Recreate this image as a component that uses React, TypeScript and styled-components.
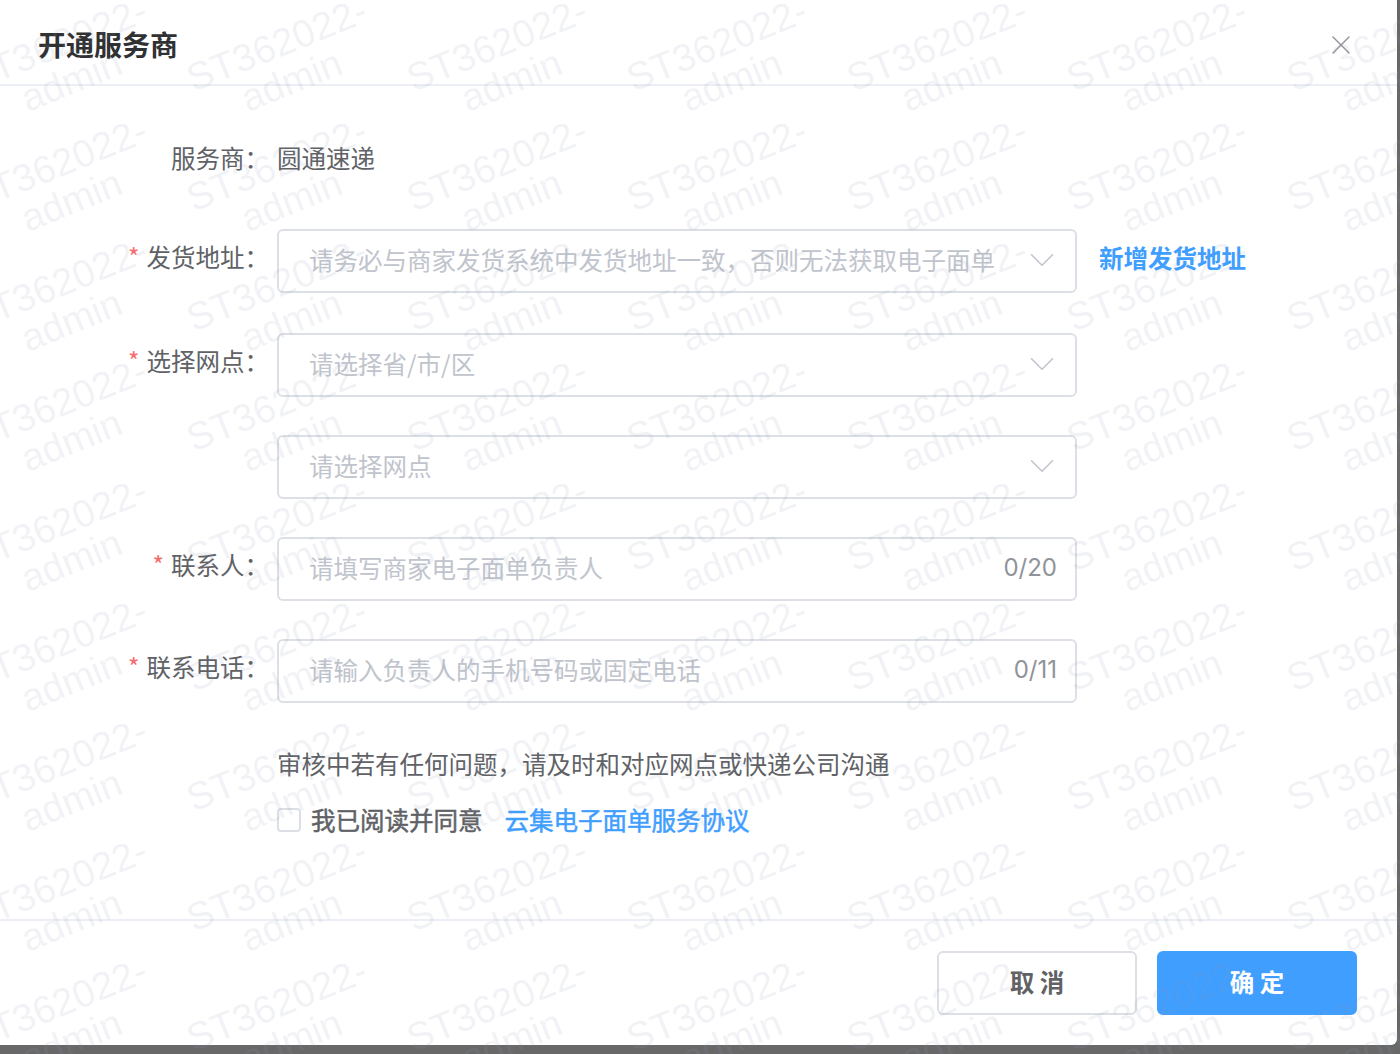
import React from 'react';
import styled, { createGlobalStyle } from 'styled-components';
import { X, ChevronDown } from 'lucide-react';

const GlobalStyle = createGlobalStyle`
  html, body {
    margin: 0;
    height: 100%;
    overflow: hidden;
    background: #686868;
  }
  * {
    box-sizing: border-box;
  }
`;

const Page = styled.div`
  position: relative;
  width: 1400px;
  height: 1054px;
  overflow: hidden;
  font-family: "Noto Sans CJK SC", "Liberation Sans", sans-serif;
`;

const Modal = styled.div`
  width: 1397px;
  height: 1045px;
  background: #fff;
  border-radius: 0 0 6px 0;
  display: flex;
  flex-direction: column;
  color: #606266;
  font-size: 24.5px;
`;

const Header = styled.header`
  height: 86px;
  flex: none;
  display: flex;
  align-items: center;
  justify-content: space-between;
  padding: 6px 40px 0 38px;
  border-bottom: 2px solid #ebeef5;
`;

const Title = styled.h2`
  margin: 0 0 2px;
  font-size: 28px;
  font-weight: 600;
  color: #303133;
  line-height: 40px;
`;

const CloseButton = styled.button`
  border: 0;
  padding: 0;
  background: none;
  color: #909399;
  display: flex;
`;

const Body = styled.div`
  flex: 1;
  padding-top: 41px;
  display: flex;
  flex-direction: column;
`;

const Row = styled.div<{ $gap: number }>`
  display: flex;
  align-items: center;
  min-height: 64px;
  margin-bottom: ${({ $gap }) => $gap}px;
`;

const Label = styled.label<{ $plain?: boolean }>`
  width: 277px;
  flex: none;
  padding: 0 8px ${({ $plain }) => ($plain ? 3 : 8)}px 0;
  text-align: right;
  line-height: 34px;
`;

const Star = styled.span`
  color: #f56c6c;
  margin-right: 7px;
`;

const Value = styled.span`
  line-height: 34px;
  padding-bottom: 3px;
`;

const Field = styled.div`
  width: 800px;
  height: 64px;
  flex: none;
  display: flex;
  align-items: center;
  justify-content: space-between;
  padding: 0 18px 3px 30px;
  border: 2px solid #dcdfe6;
  border-radius: 6px;
`;

const Placeholder = styled.span`
  color: #c0c4cc;
  white-space: nowrap;
`;

const Counter = styled.span`
  color: #909399;
  font-family: "Inter", "Liberation Sans", sans-serif;
  font-size: 24px;
`;

const Chevron = styled(ChevronDown)`
  color: #c0c4cc;
  flex: none;
  margin-right: -6px;
`;

const AddAddress = styled.a`
  margin: 0 0 8px 22px;
  color: #409eff;
  font-weight: 600;
  white-space: nowrap;
`;

const Note = styled.p`
  margin: 0 0 22px 277px;
  line-height: 34px;
`;

const AgreeRow = styled.div`
  display: flex;
  align-items: center;
  margin-left: 277px;
  line-height: 34px;
  -webkit-text-stroke: 0.5px currentColor;
`;

const CheckBox = styled.span`
  width: 24px;
  height: 24px;
  border: 2px solid #dcdfe6;
  border-radius: 4px;
  margin-right: 10px;
`;

const AgreeText = styled.span`
  margin-right: 22px;
`;

const AgreeLink = styled.a`
  color: #409eff;
  white-space: nowrap;
`;

const Footer = styled.footer`
  height: 126px;
  flex: none;
  display: flex;
  justify-content: flex-end;
  gap: 20px;
  padding: 30px 40px 0 0;
  border-top: 2px solid #ebeef5;
`;

const Button = styled.button<{ $primary?: boolean }>`
  width: 200px;
  height: 64px;
  padding: 0 0 3px;
  border-radius: 6px;
  border: 2px solid ${({ $primary }) => ($primary ? '#409eff' : '#dcdfe6')};
  background: ${({ $primary }) => ($primary ? '#409eff' : '#fff')};
  color: ${({ $primary }) => ($primary ? '#fff' : '#606266')};
  font-family: inherit;
  font-size: 24.5px;
  font-weight: 600;
`;

const Watermarks = styled.div`
  position: absolute;
  top: 2px;
  left: -266px;
  display: grid;
  grid-template-columns: repeat(9, 220px);
  grid-auto-rows: 120px;
  pointer-events: none;
`;

const Mark = styled.div`
  height: 120px;
  display: flex;
  flex-direction: column;
  align-items: center;
  justify-content: center;
  transform: rotate(-22deg);
  color: rgba(144, 155, 180, 0.12);
  font-family: "Liberation Sans", sans-serif;
  font-size: 38.5px;
  line-height: 39px;
  white-space: nowrap;
`;

const markCells = Array.from({ length: 81 }, (_, i) => i);

export default function App() {
  return (
    <Page>
      <GlobalStyle />
      <Modal>
        <Header>
          <Title>开通服务商</Title>
          <CloseButton>
            <X size={32} strokeWidth={1} />
          </CloseButton>
        </Header>

        <Body>
          <Row $gap={38}>
            <Label $plain>服务商：</Label>
            <Value>圆通速递</Value>
          </Row>
          <Row $gap={40}>
            <Label>
              <Star>*</Star>发货地址：
            </Label>
            <Field>
              <Placeholder>请务必与商家发货系统中发货地址一致，否则无法获取电子面单</Placeholder>
              <Chevron size={42} strokeWidth={0.9} />
            </Field>
            <AddAddress>新增发货地址</AddAddress>
          </Row>
          <Row $gap={38}>
            <Label>
              <Star>*</Star>选择网点：
            </Label>
            <Field>
              <Placeholder>请选择省/市/区</Placeholder>
              <Chevron size={42} strokeWidth={0.9} />
            </Field>
          </Row>
          <Row $gap={38}>
            <Label />
            <Field>
              <Placeholder>请选择网点</Placeholder>
              <Chevron size={42} strokeWidth={0.9} />
            </Field>
          </Row>
          <Row $gap={38}>
            <Label>
              <Star>*</Star>联系人：
            </Label>
            <Field>
              <Placeholder>请填写商家电子面单负责人</Placeholder>
              <Counter>0/20</Counter>
            </Field>
          </Row>
          <Row $gap={44}>
            <Label>
              <Star>*</Star>联系电话：
            </Label>
            <Field>
              <Placeholder>请输入负责人的手机号码或固定电话</Placeholder>
              <Counter>0/11</Counter>
            </Field>
          </Row>
          <Note>审核中若有任何问题，请及时和对应网点或快递公司沟通</Note>
          <AgreeRow>
            <CheckBox />
            <AgreeText>我已阅读并同意</AgreeText>
            <AgreeLink>云集电子面单服务协议</AgreeLink>
          </AgreeRow>
        </Body>

        <Footer>
          <Button>取 消</Button>
          <Button $primary>确 定</Button>
        </Footer>
      </Modal>

      <Watermarks>
        {markCells.map((i) => (
          <Mark key={i}>
            <span>ST362022-</span>
            <span>admin</span>
          </Mark>
        ))}
      </Watermarks>
    </Page>
  );
}
